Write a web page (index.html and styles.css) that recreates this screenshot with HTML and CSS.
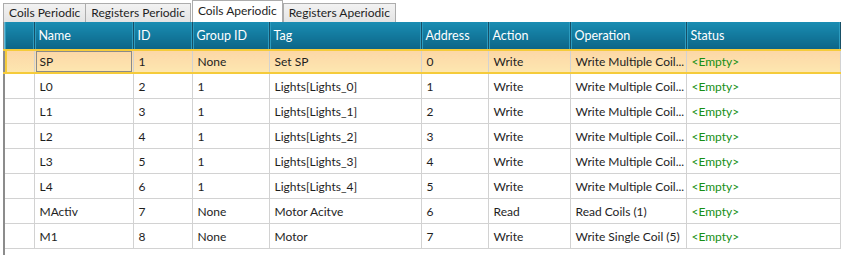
FILE: index.html
```html
<!DOCTYPE html>
<html>
<head>
  <title>Modbus Tags</title>
  <link rel="stylesheet" href="styles.css">
</head>
<body>
  <div class="tabs">
    <div class="tab">Coils Periodic</div>
    <div class="tab">Registers Periodic</div>
    <div class="tab active">Coils Aperiodic</div>
    <div class="tab">Registers Aperiodic</div>
  </div>
  <div class="grid">
    <table>
      <colgroup>
        <col style="width:30px">
        <col style="width:99px">
        <col style="width:59px">
        <col style="width:77px">
        <col style="width:152px">
        <col style="width:67px">
        <col style="width:82px">
        <col style="width:116px">
        <col>
      </colgroup>
      <tr class="head">
        <th></th><th>Name</th><th>ID</th><th>Group ID</th><th>Tag</th><th>Address</th><th>Action</th><th>Operation</th><th>Status</th>
      </tr>
      <tr class="sel">
        <td></td><td><span class="cur">SP</span></td><td>1</td><td>None</td><td>Set SP</td><td>0</td><td>Write</td><td>Write Multiple Coil...</td><td class="st">&lt;Empty&gt;</td>
      </tr>
      <tr>
        <td></td><td>L0</td><td>2</td><td>1</td><td>Lights[Lights_0]</td><td>1</td><td>Write</td><td>Write Multiple Coil...</td><td class="st">&lt;Empty&gt;</td>
      </tr>
      <tr>
        <td></td><td>L1</td><td>3</td><td>1</td><td>Lights[Lights_1]</td><td>2</td><td>Write</td><td>Write Multiple Coil...</td><td class="st">&lt;Empty&gt;</td>
      </tr>
      <tr>
        <td></td><td>L2</td><td>4</td><td>1</td><td>Lights[Lights_2]</td><td>3</td><td>Write</td><td>Write Multiple Coil...</td><td class="st">&lt;Empty&gt;</td>
      </tr>
      <tr>
        <td></td><td>L3</td><td>5</td><td>1</td><td>Lights[Lights_3]</td><td>4</td><td>Write</td><td>Write Multiple Coil...</td><td class="st">&lt;Empty&gt;</td>
      </tr>
      <tr>
        <td></td><td>L4</td><td>6</td><td>1</td><td>Lights[Lights_4]</td><td>5</td><td>Write</td><td>Write Multiple Coil...</td><td class="st">&lt;Empty&gt;</td>
      </tr>
      <tr>
        <td></td><td>MActiv</td><td>7</td><td>None</td><td>Motor Acitve</td><td>6</td><td>Read</td><td>Read Coils (1)</td><td class="st">&lt;Empty&gt;</td>
      </tr>
      <tr>
        <td></td><td>M1</td><td>8</td><td>None</td><td>Motor</td><td>7</td><td>Write</td><td>Write Single Coil (5)</td><td class="st">&lt;Empty&gt;</td>
      </tr>
    </table>
  </div>
</body>
</html>
```
FILE: styles.css
```css
body {
  margin: 0;
  background: #ffffff;
  font-family: Lato, "Noto Sans", sans-serif;
  font-size: 12px;
  color: #1e1e1e;
  overflow: hidden;
}

.tabs {
  display: flex;
  align-items: flex-end;
  height: 22px;
  padding-left: 3px;
}

.tab {
  height: 19px;
  line-height: 18px;
  padding: 0 5px;
  border: 1px solid #acacac;
  border-bottom: none;
  margin-right: -1px;
  background: linear-gradient(#f2f2f2, #e4e4e4);
  color: #1e1e1e;
  box-sizing: border-box;
  white-space: nowrap;
}

.tab.active {
  height: 22px;
  line-height: 20px;
  background: #ffffff;
  margin-left: 2px;
  margin-right: 0;
  position: relative;
  z-index: 1;
}

.grid {
  margin-left: 3px;
  border-left: 2px solid #8c8c8c;
  height: 233px;
}

table {
  border-collapse: collapse;
  table-layout: fixed;
  width: 838px;
  margin-left: -2px;
}

th {
  height: 27px;
  padding: 0 0 0 4px;
  text-align: left;
  font-weight: normal;
  color: #ffffff;
  background: linear-gradient(#1a8db3, #0c6587);
  border-left: 1px solid #6fb8d2;
  border-right: 1px solid #174f66;
  box-shadow: inset 1px 0 0 #2d9cc0, inset -1px 0 0 #2d9cc0;
  white-space: nowrap;
  overflow: hidden;
  font-size: 12.5px;
}

td {
  height: 24px;
  padding: 0 0 0 5px;
  border-right: 1px solid #d2d2d2;
  border-bottom: 1px solid #d2d2d2;
  white-space: nowrap;
  overflow: hidden;
}

td:first-child {
  border-left: 2px solid #8c8c8c;
}

tr.sel td {
  background: linear-gradient(#fcd7a6, #fde6b0);
  border-top: 2px solid #f5cb3a;
  border-bottom: 2px solid #f5cb3a;
  height: 21px;
}

tr.sel td:first-child {
  box-shadow: inset 2px 0 0 #f5cb3a;
}

.cur {
  display: block;
  margin-left: -4px;
  margin-right: 1px;
  padding-left: 3px;
  height: 19px;
  line-height: 19px;
  border: 1px solid #8a8a8a;
}

.st {
  color: #168f16;
}
```
